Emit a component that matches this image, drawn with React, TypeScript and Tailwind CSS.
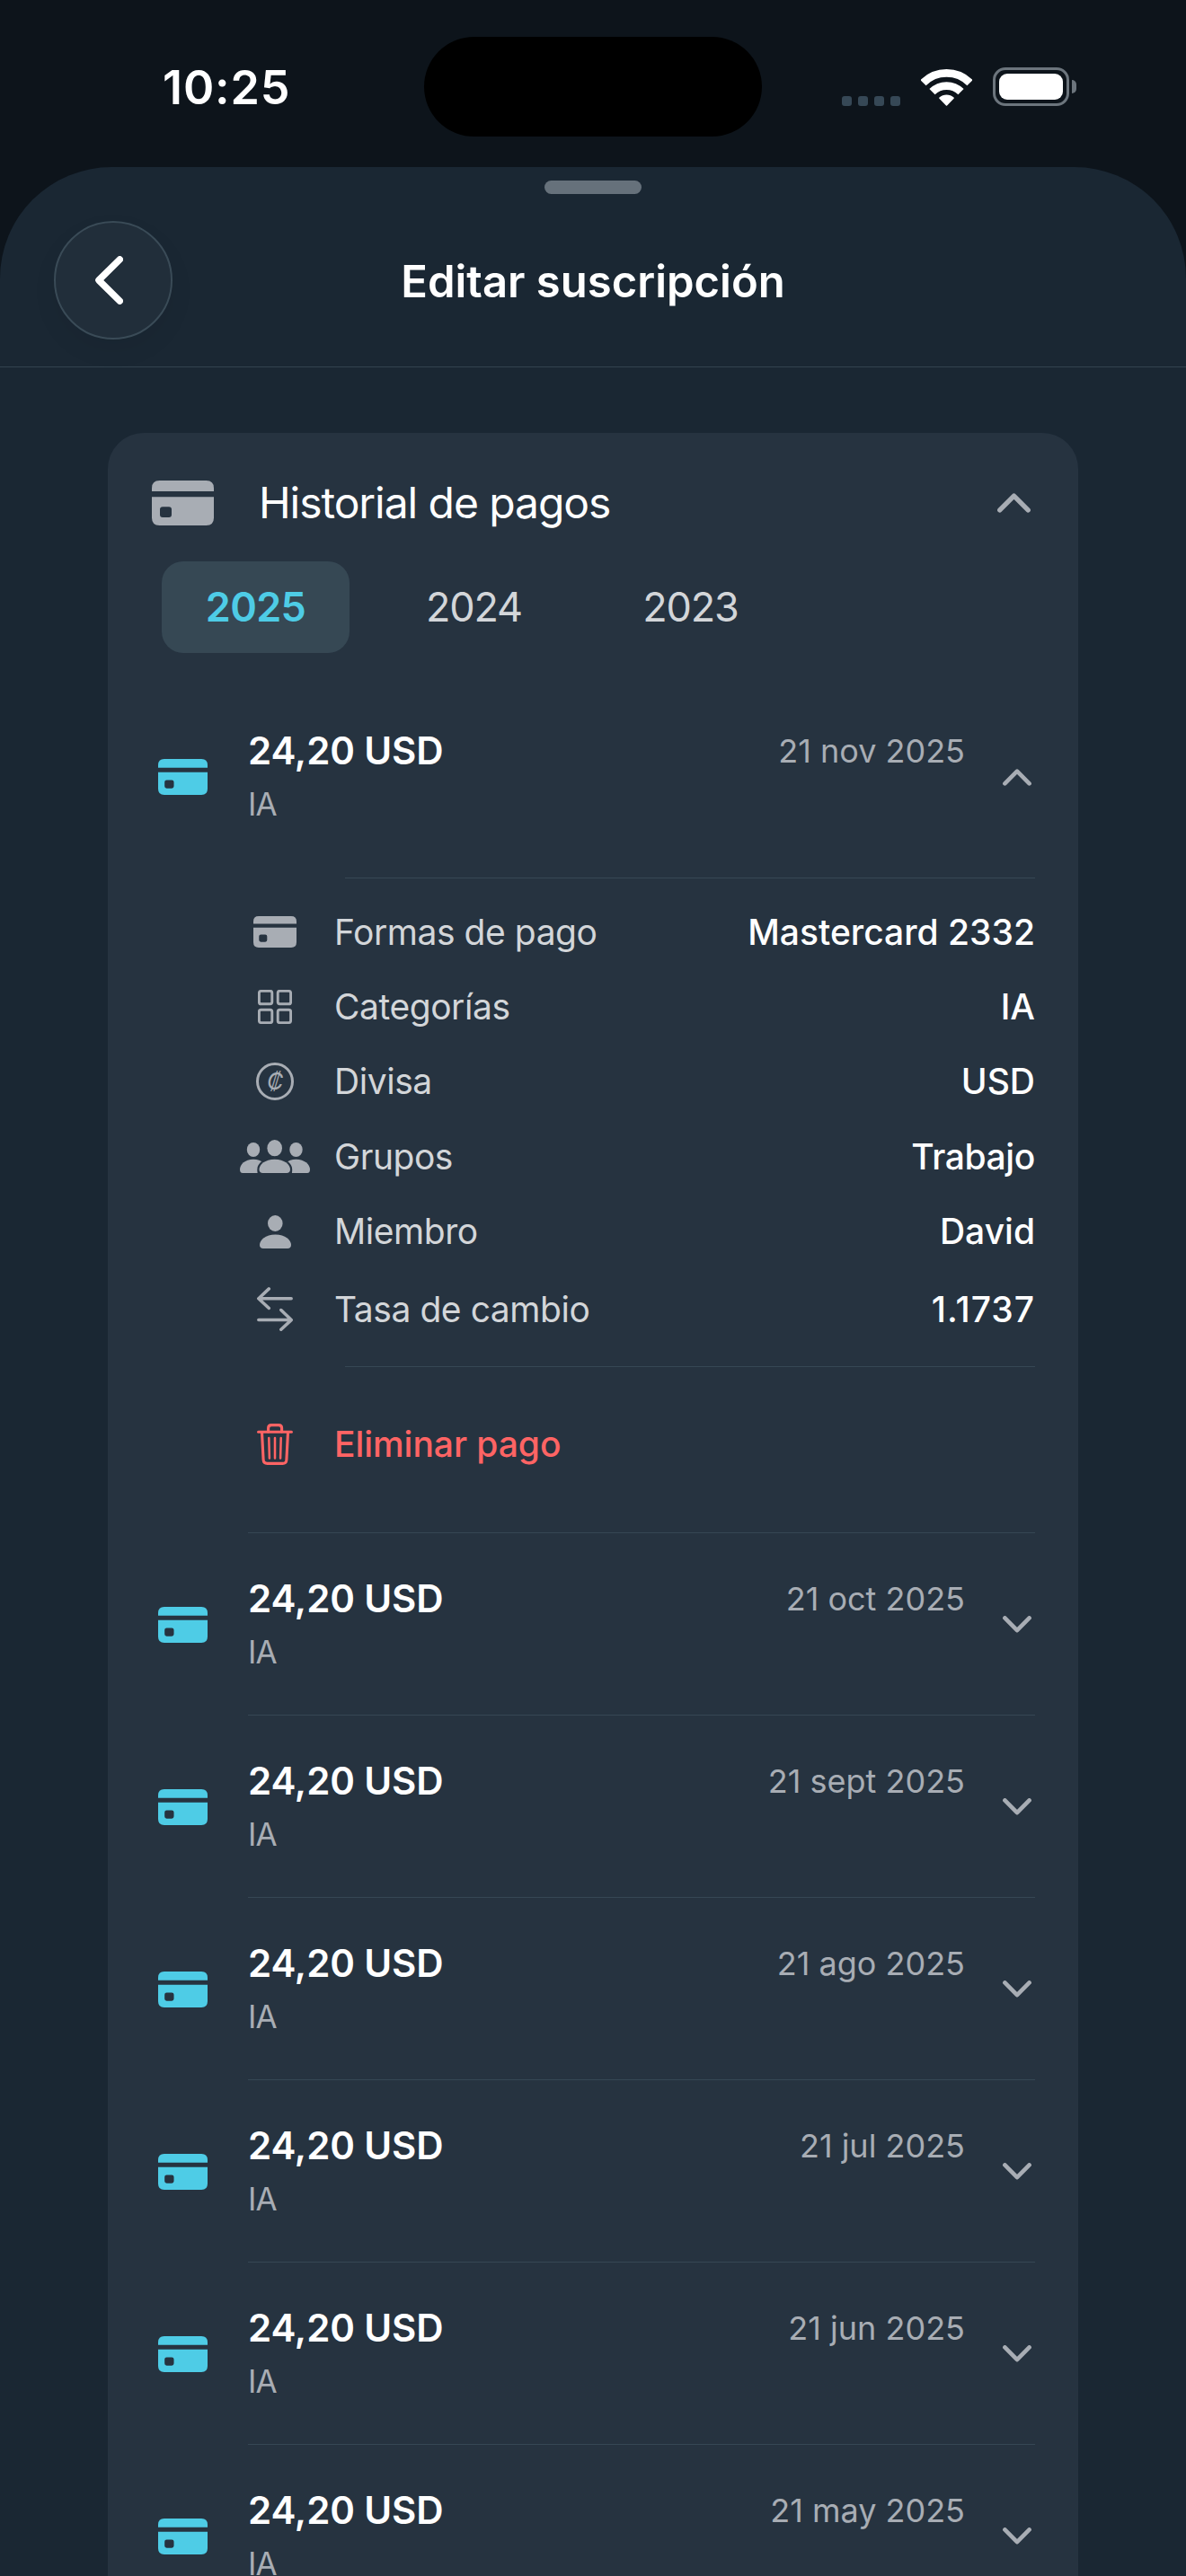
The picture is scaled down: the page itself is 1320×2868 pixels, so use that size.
import clsx from "clsx";
import React, { useState } from "react";

type IconProps = { className?: string };

const years = ["2025", "2024", "2023"];

const payments = [
    { date: "21 nov 2025", amount: "24,20 USD", category: "IA" },
    { date: "21 oct 2025", amount: "24,20 USD", category: "IA" },
    { date: "21 sept 2025", amount: "24,20 USD", category: "IA" },
    { date: "21 ago 2025", amount: "24,20 USD", category: "IA" },
    { date: "21 jul 2025", amount: "24,20 USD", category: "IA" },
    { date: "21 jun 2025", amount: "24,20 USD", category: "IA" },
    { date: "21 may 2025", amount: "24,20 USD", category: "IA" },
];

function CardIcon({ className }: IconProps) {
    return (
        <svg viewBox="0 0 69 50" fill="currentColor" className={className}>
            <path d="M0 12V8.5Q0 0 8.5 0H60.5Q69 0 69 8.5V12Z" />
            <path
                fillRule="evenodd"
                d="M0 18.3H69V41.5Q69 50 60.5 50H8.5Q0 50 0 41.500ZM12 29.3Q9 29.3 9 32.3V38Q9 41 12 41H19Q22 41 22 38V32.3Q22 29.3 19 29.3Z"
            />
        </svg>
    );
}

function Chevron({ open, className }: IconProps & { open: boolean }) {
    return (
        <svg
            viewBox="0 0 32 19"
            fill="none"
            stroke="currentColor"
            strokeWidth="4.6"
            strokeLinecap="round"
            strokeLinejoin="round"
            className={className}
        >
            <path d={open ? "M2.4 16.4L16 2.6L29.6 16.4" : "M2.4 2.4L16 16.2L29.6 2.4"} />
        </svg>
    );
}

function GridIcon() {
    return (
        <svg viewBox="0 0 38 38" fill="none" stroke="currentColor" strokeWidth="2.9" className="size-[38px]">
            <rect x="1.4" y="1.4" width="14.4" height="14.4" rx="2.2" />
            <rect x="22.2" y="1.4" width="14.4" height="14.4" rx="2.2" />
            <rect x="1.4" y="22.2" width="14.4" height="14.4" rx="2.2" />
            <rect x="22.2" y="22.2" width="14.4" height="14.4" rx="2.2" />
        </svg>
    );
}

function CoinIcon() {
    return (
        <span className="flex size-[42px] items-center justify-center rounded-full border-3 border-current">
            <span className="text-[25px] leading-none italic">₡</span>
        </span>
    );
}

function GroupIcon() {
    return (
        <svg viewBox="0 0 78 38" fill="currentColor" className="h-[38px] w-[78px]">
            <ellipse cx="15" cy="11" rx="7.2" ry="8" />
            <ellipse cx="62.5" cy="11" rx="7.2" ry="8" />
            <path d="M0 33C0 27.5 5.5 21.7 15 21.7S30 27.5 30 33V37H3C1 37 0 35.5 0 33Z" />
            <path d="M78 33C78 27.5 72 21.7 62.5 21.7S47.5 27.5 47.5 33V37H75C77 37 78 35.5 78 33Z" />
            <path
                d="M19.3 33C19.3 26.2 27 19.6 38.7 19.6S58.2 26.2 58.2 33C58.2 36 57.7 38 57.7 38H19.8C19.8 38 19.3 36 19.3 33Z"
                className="fill-[#263340]"
            />
            <ellipse cx="38.7" cy="9.2" rx="8.3" ry="9.1" />
            <path d="M21.5 33C21.5 27.5 28 21.7 38.7 21.7S56 27.5 56 33C56 35.5 54.5 37 52 37H25.5C23 37 21.5 35.5 21.5 33Z" />
        </svg>
    );
}

function PersonIcon() {
    return (
        <svg viewBox="0 0 35 37" fill="currentColor" className="h-[37px] w-[35px]">
            <ellipse cx="17.3" cy="9" rx="8.3" ry="9" />
            <path d="M0 33C0 27.5 6.5 21.5 17.5 21.5S35 27.5 35 33C35 35.5 33.5 37 31 37H4C1.5 37 0 35.5 0 33Z" />
        </svg>
    );
}

function ExchangeIcon() {
    return (
        <svg
            viewBox="0 0 40 49"
            fill="none"
            stroke="currentColor"
            strokeWidth="3.5"
            strokeLinecap="round"
            strokeLinejoin="round"
            className="h-[49px] w-[40px]"
        >
            <path d="M38.2 12.7H2M13.3 1.9L1.8 12.7L13.3 23.5" />
            <path d="M1.8 36.6H38M26.8 25.5L38.2 36.6L26.8 47.3" />
        </svg>
    );
}

function TrashIcon() {
    return (
        <svg
            viewBox="0 0 40 46"
            fill="none"
            stroke="currentColor"
            strokeWidth="3.1"
            strokeLinecap="round"
            strokeLinejoin="round"
            className="h-[46px] w-[40px]"
        >
            <path d="M1.6 9.3H38.4" />
            <path d="M12.6 9V5Q12.6 1.6 16.1 1.6H24.1Q27.6 1.6 27.6 5V9" />
            <path d="M5.500 9.5L7.1 40.2Q7.3 44.4 11.5 44.4H28.5Q32.7 44.4 32.9 40.2L34.5 9.5" />
            <path d="M13.3 16L13.9 38.5M20 16V38.5M26.7 16L26.1 38.5" strokeWidth="2.5" />
        </svg>
    );
}

const details: { icon: React.ReactNode; label: string; value: string; tracking?: string }[] = [
    { icon: <CardIcon className="h-[35px] w-[48px]" />, label: "Formas de pago", value: "Mastercard 2332" },
    { icon: <GridIcon />, label: "Categorías", value: "IA" },
    { icon: <CoinIcon />, label: "Divisa", value: "USD" },
    { icon: <GroupIcon />, label: "Grupos", value: "Trabajo", tracking: "tracking-[-0.38px]" },
    { icon: <PersonIcon />, label: "Miembro", value: "David" },
    { icon: <ExchangeIcon />, label: "Tasa de cambio", value: "1.1737", tracking: "tracking-[1px]" },
];

function StatusBar() {
    return (
        <div className="flex h-[186px] items-start pt-[41px]">
            <div className="flex h-[111px] items-center">
                <div className="w-[472px] pt-[3px] pl-[181px] text-[52px] leading-[60px] font-semibold tracking-[0.9px]">
                    10:25
                </div>
                <div className="h-[111px] w-[376px] rounded-full bg-black" />
                <div className="ml-[89px] flex items-center">
                    <div className="flex h-[42px] items-end gap-[7px]">
                        {[0, 1, 2, 3].map((i) => (
                            <span key={i} className="size-[11px] rounded-[3px] bg-[#364856]" />
                        ))}
                    </div>
                    <svg viewBox="0 0 57 42" className="ml-[23px] h-[42px] w-[57px]" fill="none" stroke="white">
                        <path d="M2.5 16.2A36.8 36.8 0 0 1 54.5 16.2" strokeWidth="8.8" />
                        <path d="M12.5 26.2A22.6 22.6 0 0 1 44.5 26.2" strokeWidth="8.8" />
                        <path
                            d="M28.5 41L21 33.2A11 11 0 0 1 36 33.2Z"
                            fill="white"
                            strokeWidth="1.6"
                            strokeLinejoin="round"
                        />
                    </svg>
                    <div className="ml-[23px] flex h-[43px] w-[85px] items-center justify-center rounded-[14px] border-3 border-[#6c757d]">
                        <div className="h-[29px] w-[71px] rounded-[9px] bg-white" />
                    </div>
                    <div className="ml-[3px] h-[15px] w-[5px] rounded-r-full bg-[#6c757d]" />
                </div>
            </div>
        </div>
    );
}

function SheetHeader() {
    return (
        <header className="grid h-[192px] grid-cols-[1fr_auto_1fr] items-center px-[60px]">
            <button className="flex size-[132px] items-center justify-center rounded-full border-2 border-[#3a4b57] bg-[#212e3a] pr-[9px] shadow-[0_12px_28px_rgba(0,0,0,0.06)]">
                <svg
                    viewBox="0 0 31 54"
                    fill="none"
                    stroke="white"
                    strokeWidth="7.4"
                    strokeLinecap="round"
                    strokeLinejoin="round"
                    className="h-[54px] w-[31px]"
                >
                    <path d="M27.3 3.8L3.9 27L27.3 50.2" />
                </svg>
            </button>
            <h1 className="pt-[3px] text-[49px] leading-[60px] font-semibold">Editar suscripción</h1>
        </header>
    );
}

function PaymentDetails() {
    return (
        <div>
            <div className="mt-[12px] mr-[48px] ml-[264px] h-px bg-[#364754]" />
            <ul className="pt-[18px] pr-[48px] pl-[144px] text-[39px] leading-[54px]">
                {details.map(({ icon, label, value, tracking }) => (
                    <li key={label} className="flex h-[83.4px] items-center last:h-[90px]">
                        <span className="flex w-[84px] justify-center text-[#a8adb4]">{icon}</span>
                        <span className="ml-[24px] flex-1 tracking-[-0.45px] text-[#d3d6d9]">{label}</span>
                        <span className={clsx("font-medium text-white", tracking)}>{value}</span>
                    </li>
                ))}
            </ul>
            <div className="mt-[18px] mr-[48px] ml-[264px] h-px bg-[#364754]" />
            <button className="flex h-[184px] items-center pb-[11px] pl-[144px] text-[#ff6464]">
                <span className="flex w-[84px] justify-center">
                    <TrashIcon />
                </span>
                <span className="ml-[24px] text-[39px] leading-[54px] font-medium tracking-[-0.05px]">Eliminar pago</span>
            </button>
        </div>
    );
}

export default function App() {
    const [year, setYear] = useState("2025");
    const [openIndex, setOpenIndex] = useState(0);

    return (
        <div className="h-[2868px] w-[1320px] overflow-hidden bg-[#0d141b] font-['Inter',sans-serif] text-white">
            <StatusBar />

            {/* Bottom sheet */}
            <div className="h-[2682px] overflow-hidden rounded-t-[124px] bg-[#1a2733] pt-[15px]">
                <div className="mx-auto h-[15px] w-[108px] rounded-full bg-[#66717b]" />
                <SheetHeader />
                <div className="h-px bg-[#33434f]" />

                <section className="mx-[120px] mt-[73px] rounded-t-[40px] bg-[#263340]">
                    <div className="flex h-[143px] items-center pt-[13px] pr-[53px] pl-[49px]">
                        <CardIcon className="h-[50px] w-[69px] text-[#a8adb4]" />
                        <h2 className="ml-[50px] flex-1 text-[48px] leading-[60px] tracking-[-1.06px]">Historial de pagos</h2>
                        <Chevron open className="h-[22px] w-[37px] text-[#a8adb4]" />
                    </div>

                    {/* Year tabs */}
                    <div className="flex gap-[36px] pl-[60px]">
                        {years.map((y) => (
                            <button
                                key={y}
                                onClick={() => setYear(y)}
                                className={clsx(
                                    "h-[102px] rounded-[24px] text-[45px] leading-[60px]",
                                    y === year
                                        ? "w-[209px] bg-[#364854] font-semibold tracking-[-0.7px] text-[#4ecce6]"
                                        : "w-[205px] tracking-[-1.19px] text-[#d3d6d9]"
                                )}
                            >
                                {y}
                            </button>
                        ))}
                    </div>

                    <div className="mt-[36px]">
                        {payments.map((p, i) => (
                            <div key={p.date}>
                                {i > 0 && <div className="mr-[48px] ml-[156px] h-px bg-[#364754]" />}
                                <div
                                    onClick={() => setOpenIndex(i === openIndex ? -1 : i)}
                                    className="flex h-[202px] items-center pr-[52px] pl-[56px]"
                                >
                                    <CardIcon className="mt-[2px] h-[40px] w-[55px] text-[#4ecce6]" />
                                    <div className="ml-[45px] flex-1">
                                        <div className="flex items-center justify-between leading-[54px]">
                                            <span className="text-[42px] font-semibold tracking-[-0.1px]">{p.amount}</span>
                                            <span className="text-[36px] text-[#a8adb4]">{p.date}</span>
                                        </div>
                                        <p className="mt-[8px] text-[35px] leading-[48px] tracking-[-1px] text-[#a8adb4]">
                                            {p.category}
                                        </p>
                                    </div>
                                    <Chevron open={i === openIndex} className="mt-[2px] ml-[42px] h-[19px] w-[32px] text-[#a8adb4]" />
                                </div>
                                {i === openIndex && <PaymentDetails />}
                            </div>
                        ))}
                    </div>
                </section>
            </div>
        </div>
    );
}
